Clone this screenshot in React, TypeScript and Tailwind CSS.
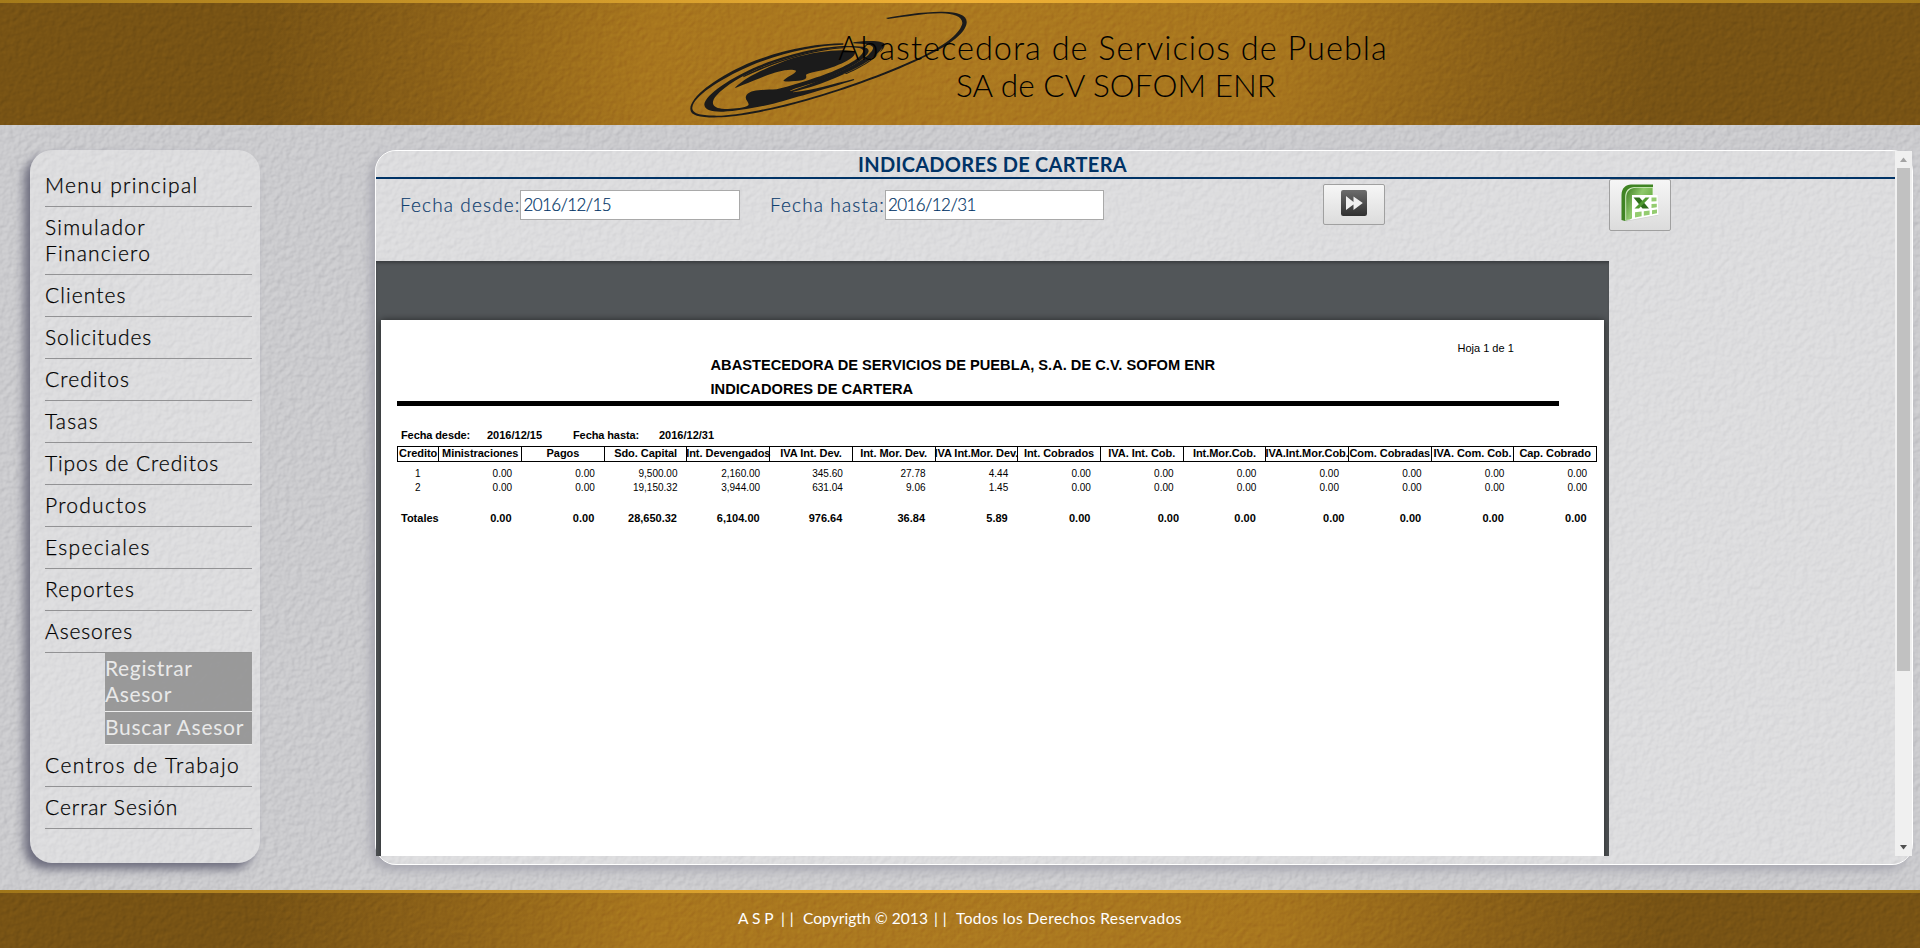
type MenuItem = { label: string; track: string };

const menuTop: MenuItem[] = [
  { label: "Menu principal", track: "tracking-[1.34px]" },
  { label: "Simulador Financiero", track: "tracking-[1.23px]" },
  { label: "Clientes", track: "tracking-[1.08px]" },
  { label: "Solicitudes", track: "tracking-[0.93px]" },
  { label: "Creditos", track: "tracking-[1.15px]" },
  { label: "Tasas", track: "tracking-[1.2px]" },
  { label: "Tipos de Creditos", track: "tracking-[0.9px]" },
  { label: "Productos", track: "tracking-[1.27px]" },
  { label: "Especiales", track: "tracking-[1.3px]" },
  { label: "Reportes", track: "tracking-[1.15px]" },
  { label: "Asesores", track: "tracking-[0.87px]" },
];

const menuBottom: MenuItem[] = [
  { label: "Centros de Trabajo", track: "tracking-[1.43px]" },
  { label: "Cerrar Sesión", track: "tracking-[0.92px]" },
];

const columns = [
  "Credito",
  "Ministraciones",
  "Pagos",
  "Sdo. Capital",
  "Int. Devengados",
  "IVA Int. Dev.",
  "Int. Mor. Dev.",
  "IVA Int.Mor. Dev.",
  "Int. Cobrados",
  "IVA. Int. Cob.",
  "Int.Mor.Cob.",
  "IVA.Int.Mor.Cob.",
  "Com. Cobradas",
  "IVA. Com. Cob.",
  "Cap. Cobrado",
];

const rows = [
  ["1", "0.00", "0.00", "9,500.00", "2,160.00", "345.60", "27.78", "4.44", "0.00", "0.00", "0.00", "0.00", "0.00", "0.00", "0.00"],
  ["2", "0.00", "0.00", "19,150.32", "3,944.00", "631.04", "9.06", "1.45", "0.00", "0.00", "0.00", "0.00", "0.00", "0.00", "0.00"],
];

const totals = ["0.00", "0.00", "28,650.32", "6,104.00", "976.64", "36.84", "5.89", "0.00", "0.00", "0.00", "0.00", "0.00", "0.00", "0.00"];

const tableGrid = "grid grid-cols-[41.4px_repeat(14,82.7px)]";

function Texture({ id, strength }: { id: string; strength: number }) {
  return (
    <svg className="pointer-events-none absolute inset-0 h-full w-full mix-blend-overlay" aria-hidden="true">
      <filter id={id} x="0" y="0" width="100%" height="100%" colorInterpolationFilters="sRGB">
        <feTurbulence type="fractalNoise" baseFrequency="0.17" numOctaves="2" seed="4" />
        <feColorMatrix values="0 0 0 0 0  0 0 0 0 0  0 0 0 0 0  1 0 0 0 0" />
        <feDiffuseLighting surfaceScale={strength} diffuseConstant="0.577" lightingColor="#ffffff">
          <feDistantLight azimuth="225" elevation="60" />
        </feDiffuseLighting>
      </filter>
      <rect width="100%" height="100%" filter={`url(#${id})`} />
    </svg>
  );
}

function Logo() {
  return (
    <svg className="h-[130px] w-[300px] shrink-0" viewBox="0 0 900 390" fill="#1b1b1b">
      <path d="M618 54 C660 46 730 34 790 35 C835 36 862 46 860 68 C858 96 815 132 740 168 C640 218 500 268 380 302 C290 328 190 348 125 352 C70 354 30 350 31 326 C33 290 100 238 200 192 C300 150 410 130 490 130 L490 134 C410 136 310 156 210 198 C110 242 42 290 37 322 C34 345 75 348 125 347 C190 343 290 322 378 297 C500 262 640 210 736 164 C805 130 842 96 847 70 C848 50 820 41 785 40 C740 39 680 50 624 57 Z" />
      <path d="M520 127 C570 120 614 122 614 134 C614 160 530 215 395 260 L330 278 L330 274 C400 250 520 205 565 165 C588 143 590 132 520 130 Z M500 222 C560 196 600 166 606 144 C590 170 550 196 490 222 Z" />
      <path d="M500 138 C440 138 330 158 235 198 C150 234 78 284 73 312 C72 330 95 336 130 335 C180 333 260 318 310 303 C390 280 480 254 523 240 L521 237 C460 252 400 270 340 277 L330 272 C350 262 385 254 420 242 C480 220 560 180 566 154 C568 140 540 138 500 138 Z M500 142 C540 142 555 146 548 158 C535 182 470 212 410 232 C370 246 330 258 290 268 C250 270 215 268 200 284 C190 300 210 306 205 316 C190 326 150 328 125 326 C96 322 92 308 108 288 C135 256 190 224 250 200 C330 168 430 144 500 142 Z" fillRule="evenodd" />
      <path d="M166 262 C200 228 270 198 340 174 C410 154 480 146 524 154 C532 170 490 190 450 204 C420 214 385 218 378 224 C378 230 384 236 366 241 C345 244 322 246 310 243 C314 232 350 220 348 212 C330 204 290 214 250 230 C215 244 190 254 166 264 Z" />
      <path d="M190 228 C270 186 400 146 490 142 L490 145 C400 150 280 188 190 232 Z" />
    </svg>
  );
}

function ForwardIcon() {
  return (
    <svg className="h-[26px] w-[26px]" viewBox="0 0 26 26">
      <defs>
        <linearGradient id="fwd" x1="0" y1="0" x2="0" y2="1">
          <stop offset="0" stopColor="#6c6c6c" />
          <stop offset="1" stopColor="#303030" />
        </linearGradient>
      </defs>
      <rect width="26" height="26" rx="2.2" fill="url(#fwd)" />
      <path d="M5 6 L12.5 12 V6.5 L21.8 13 L12.5 20 V14.5 L5 20 Z" fill="#f0f0f0" />
    </svg>
  );
}

function ExcelIcon() {
  return (
    <svg className="h-[38px] w-[38px]" viewBox="0 0 38 38">
      <defs>
        <linearGradient id="xl" x1="0" y1="0" x2="1" y2="0.6">
          <stop offset="0" stopColor="#3c7d20" />
          <stop offset="0.5" stopColor="#8fc96c" />
          <stop offset="1" stopColor="#5fa63a" />
        </linearGradient>
      </defs>
      <path d="M0.5 36 V11 C0.5 4 5 0.5 10 0.5 H32 V10 H17 V34 L4 37 Z" fill="#3f8423" />
      <path d="M4.2 36.5 V13 C4.2 6.5 8 3 14 3 H32 V12 H12 V34.5 L5 36.8 Z" fill="#d3ecc4" />
      <path d="M5.2 36 V14 C5.2 7.5 9 3.8 15 3.8 H31.5 V12 H12 V34.5 Z" fill="url(#xl)" />
      <path d="M11 11 H36.5 L37.5 31.5 L5 37.2 L11 34.5 Z" fill="#ffffff" />
      <path d="M37.5 31.5 L5 37.4 V36.8 L37.5 30.8 Z" fill="#b9b9b9" opacity="0.7" />
      <path d="M12.5 13.5 H18.5 L28 24.5 H21.5 Z" fill="#2f6e1c" />
      <path d="M24.5 13.5 H28.5 L18 24.5 H13.5 Z" fill="#4f9a31" />
      <g fill="#94cc70">
        <path d="M30.5 13.5 H35.5 V17.2 L30.5 17.5 Z M30.5 20 L35.8 19.7 V23.3 L30.5 24 Z M31 26.3 L36 25.6 V29.3 L31 30.3 Z M22.8 27.3 L28.6 26.6 V30.8 L22.8 31.8 Z M14 28.3 L20.6 27.6 V32.2 L14 33.4 Z" />
      </g>
    </svg>
  );
}

function MenuEntry({ item }: { item: MenuItem }) {
  return (
    <li className="border-b border-[#929294] pt-[7px] pb-2">
      <a className={`block text-[21px] leading-[26px] font-light text-black [-webkit-text-stroke:0.25px_#000] ${item.track}`}>{item.label}</a>
    </li>
  );
}

function Sidebar() {
  return (
    <nav className="mt-[25px] ml-[30px] h-[713px] w-[230px] shrink-0 rounded-[22px] bg-[#fafafa]/38 pt-[15px] pr-2 pl-[15px] shadow-[-6px_6px_10px_#6d6d7e]">
      <ul>
        {menuTop.map((item) => (
          <MenuEntry key={item.label} item={item} />
        ))}
        <li>
          <ul className="-mt-px ml-[60px] text-[21px] leading-[26px] text-[#e9e9e9]">
            <li className="border-b border-[#eeeeee] bg-[#959595]/94 pt-[3px] pb-[4px] tracking-[0.65px]">
              Registrar
              <br />
              Asesor
            </li>
            <li className="border-b border-[#eeeeee] bg-[#959595]/94 pt-[2px] pb-[4px] tracking-[0.73px] whitespace-nowrap">Buscar Asesor</li>
          </ul>
        </li>
        {menuBottom.map((item) => (
          <MenuEntry key={item.label} item={item} />
        ))}
      </ul>
    </nav>
  );
}

function Field({ label, value, width }: { label: string; value: string; width: string }) {
  return (
    <label className={`flex shrink-0 items-start ${width}`}>
      <span className="flex-1 text-[19px] leading-[29px] font-light tracking-[1.12px] whitespace-nowrap text-[#10406f] [-webkit-text-stroke:0.2px_#10406f]">{label}</span>
      <span className="h-[30px] w-[220px] border border-[#a9a9a9] bg-white pl-[2px] text-[17px] leading-[28px] font-light tracking-[-0.6px] text-[#003366] [-webkit-text-stroke:0.2px_#003366]">{value}</span>
    </label>
  );
}

function Report() {
  return (
    <div className="flex h-[595px] w-[1233px] flex-col overflow-hidden bg-[#525659] font-['Liberation_Sans',Arial,sans-serif] text-black shadow-[inset_0_3px_3px_-1px_#3a3d40]">
      <div className="mx-auto mt-[59px] h-[700px] w-[1223px] shrink-0 bg-white pl-4 shadow-[0_0_7px_rgba(0,0,0,0.55)]">
        <div className="flex h-[33px] pt-[21px] pl-[1060.5px] text-[11px] leading-[14px] whitespace-nowrap">Hoja 1 de 1</div>
        <div className="h-12 pl-[313.5px] text-[14.65px] leading-6 font-bold whitespace-nowrap">
          <div>ABASTECEDORA DE SERVICIOS DE PUEBLA, S.A. DE C.V. SOFOM ENR</div>
          <div>INDICADORES DE CARTERA</div>
        </div>
        <div className="h-[5px] w-[1162px] bg-black" />
        <div className="mt-[22px] flex h-[18px] text-[11px] leading-[14px] font-bold">
          <span className="w-[86px] pl-[4px] tracking-[-0.1px]">Fecha desde:</span>
          <span className="w-[86px] pl-[4px]">2016/12/15</span>
          <span className="w-[86px] pl-[4px] tracking-[-0.1px]">Fecha hasta:</span>
          <span className="pl-[4px]">2016/12/31</span>
        </div>
        <div className="flex">
          <div className={`${tableGrid} h-4 border-y border-l border-black`}>
            {columns.map((c) => (
              <div key={c} className="flex justify-center border-r border-black text-[11px] leading-[13px] font-bold tracking-[-0.05px] whitespace-nowrap">
                <span className="-mx-2 shrink-0">{c}</span>
              </div>
            ))}
          </div>
        </div>
        <div className="pt-[5px]">
          {rows.map((r) => (
            <div key={r[0]} className={`${tableGrid} text-[10px] leading-[14px]`}>
              {r.map((v, i) => (
                <span key={i} className={i === 0 ? "text-center" : "pr-[9px] text-right"}>
                  {v}
                </span>
              ))}
            </div>
          ))}
        </div>
        <div className={`${tableGrid} mt-[16px] text-[11px] leading-[14px] font-bold`}>
          <span className="pl-1">Totales</span>
          {totals.map((v, i) => (
            <span key={i} className={i === 8 || i === 10 ? "pr-[3.5px] text-right" : "pr-[9.5px] text-right"}>
              {v}
            </span>
          ))}
        </div>
      </div>
    </div>
  );
}

function Scrollbar() {
  return (
    <div className="flex w-[17px] shrink-0 flex-col items-center bg-[#f0f0f0]">
      <svg className="h-[17px] w-[17px] shrink-0" viewBox="0 0 17 17">
        <path d="M5 11 L8.5 6.5 L12 11 Z" fill="#a3a3a3" />
      </svg>
      <div className="h-[503px] w-[13px] bg-[#c1c1c1]" />
      <svg className="mt-auto h-[17px] w-[17px] shrink-0" viewBox="0 0 17 17">
        <path d="M5 6 L12 6 L8.5 10.5 Z" fill="#505050" />
      </svg>
    </div>
  );
}

const buttonStyle = "flex w-[62px] shrink-0 items-start justify-center rounded-[2px] border border-[#a0a0a0] bg-linear-to-b from-[#f6f6f6] to-[#dcdcdc]";

function Panel() {
  return (
    <main className="mt-[25px] ml-[115px] h-[715px] w-[1538px] shrink-0 rounded-[21px] border border-white bg-[#fafafa]/38 bg-clip-padding shadow-[-5px_5px_10px_#a9a9b2]">
      <div className="flex h-[705px] overflow-hidden">
        <div className="flex w-[1519px] shrink-0 flex-col">
          <div className="h-7 border-b-2 border-[#003366]">
            <h2 className="w-[1233px] text-center text-[20px] leading-[26px] font-bold tracking-[0.29px] text-[#003366]">INDICADORES DE CARTERA</h2>
          </div>
          <div className="flex h-[82px] items-start pl-[24px]">
            <div className="flex w-[923px] gap-[30px] pt-[11px]">
              <Field label="Fecha desde:" value="2016/12/15" width="w-[340px]" />
              <Field label="Fecha hasta:" value="2016/12/31" width="w-[334px]" />
            </div>
            <button className={`${buttonStyle} mt-[5px] h-[41px] pt-[5px]`}>
              <ForwardIcon />
            </button>
            <button className={`${buttonStyle} ml-[224px] h-[52px] pt-[4px]`}>
              <ExcelIcon />
            </button>
          </div>
          <Report />
        </div>
        <Scrollbar />
      </div>
    </main>
  );
}

const barBackdrop =
  "absolute inset-0 -z-10 bg-[radial-gradient(ellipse_700px_420px_at_50%_50%,#ac7920_0%,#a8761e_45%,#8c6118_75%,#785314_100%)]";

export default function App() {
  return (
    <div className="relative isolate flex h-[948px] w-[1920px] flex-col overflow-hidden font-['Lato','Open_Sans',sans-serif]">
      <div className="absolute inset-0 -z-10 bg-[#cbcbce]">
        <Texture id="plaster" strength={1.1} />
      </div>

      <header className="relative isolate flex h-[125px] shrink-0 flex-col">
        <div className={barBackdrop}>
          <Texture id="plaster-top" strength={0.4} />
        </div>
        <div className="h-[3px] shrink-0 bg-linear-to-r from-[#a47a1a] via-[#f0b136] to-[#a47a1a]" />
        <div className="-mt-[3px] flex pl-[680px]">
          <Logo />
          <h1 className="-ml-[142px] w-[550px] pt-[29px] text-center text-[31.5px] leading-[37px] font-light whitespace-nowrap text-black">
            <span className="text-[32.5px] tracking-[1px]">Abastecedora de Servicios de Puebla</span>
            <br />
            <span className="relative left-[3px] tracking-[0.05px]">SA de CV SOFOM ENR</span>
          </h1>
        </div>
      </header>

      <div className="flex h-[765px] shrink-0">
        <Sidebar />
        <Panel />
      </div>

      <footer className="relative isolate flex h-[58px] shrink-0 flex-col">
        <div className={barBackdrop}>
          <Texture id="plaster-bottom" strength={0.4} />
        </div>
        <div className="h-[3px] shrink-0 bg-linear-to-r from-[#a0761a] via-[#f0b136] to-[#a0761a]" />
        <p className="mx-auto flex w-[444px] pt-[15px] text-[15.5px] leading-[20px] whitespace-pre text-white">
          <span className="w-[43px]">A S P</span>
          <span className="w-[22px] tracking-[5px]">||</span>
          <span className="w-[131px] tracking-[0.07px]">Copyrigth © 2013</span>
          <span className="w-[22px] tracking-[5px]">||</span>
          <span className="tracking-[0.42px]">Todos los Derechos Reservados</span>
        </p>
      </footer>
    </div>
  );
}
